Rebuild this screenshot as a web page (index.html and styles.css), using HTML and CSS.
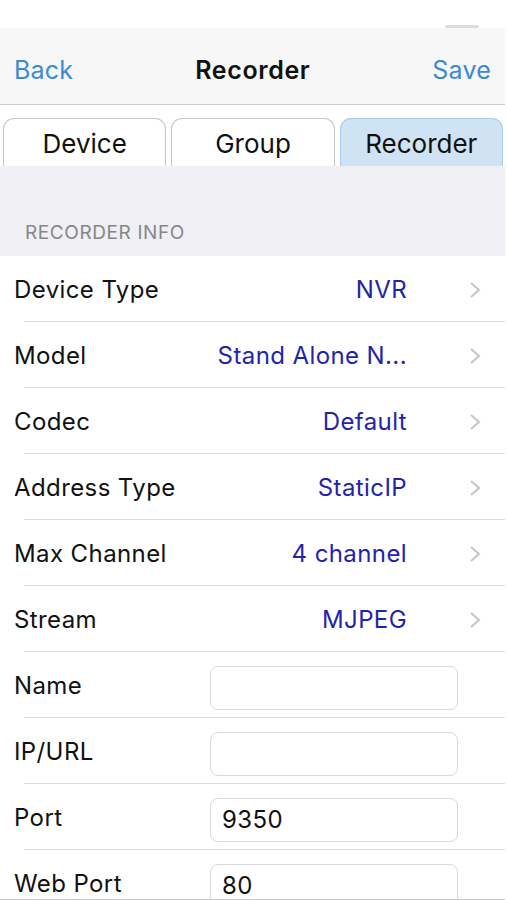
FILE: index.html
```html
<!DOCTYPE html>
<html lang="en">
<head>
    <meta charset="UTF-8">
    <meta name="viewport" content="width=device-width, initial-scale=1.0">
    <title>Recorder</title>
    <link rel="stylesheet" href="styles.css">
</head>
<body>
    <div class="screen">
        <div class="status">
            <span class="grabber"></span>
        </div>

        <header class="navbar">
            <a class="nav-btn" href="#">Back</a>
            <h1 class="nav-title">Recorder</h1>
            <a class="nav-btn" href="#">Save</a>
        </header>

        <nav class="tabs">
            <a class="tab" href="#">Device</a>
            <a class="tab" href="#">Group</a>
            <a class="tab active" href="#">Recorder</a>
        </nav>

        <div class="section-head">RECORDER INFO</div>

        <ul class="list">
            <li class="row">
                <span class="label">Device Type</span>
                <span class="value">NVR</span>
                <svg class="chevron" viewBox="0 0 12 18"><path d="M2 2 L10 9 L2 16"/></svg>
            </li>
            <li class="row">
                <span class="label">Model</span>
                <span class="value">Stand Alone N...</span>
                <svg class="chevron" viewBox="0 0 12 18"><path d="M2 2 L10 9 L2 16"/></svg>
            </li>
            <li class="row">
                <span class="label">Codec</span>
                <span class="value">Default</span>
                <svg class="chevron" viewBox="0 0 12 18"><path d="M2 2 L10 9 L2 16"/></svg>
            </li>
            <li class="row">
                <span class="label">Address Type</span>
                <span class="value">StaticIP</span>
                <svg class="chevron" viewBox="0 0 12 18"><path d="M2 2 L10 9 L2 16"/></svg>
            </li>
            <li class="row">
                <span class="label">Max Channel</span>
                <span class="value">4 channel</span>
                <svg class="chevron" viewBox="0 0 12 18"><path d="M2 2 L10 9 L2 16"/></svg>
            </li>
            <li class="row">
                <span class="label">Stream</span>
                <span class="value">MJPEG</span>
                <svg class="chevron" viewBox="0 0 12 18"><path d="M2 2 L10 9 L2 16"/></svg>
            </li>
            <li class="row">
                <label class="label" for="name">Name</label>
                <input class="field" type="text" id="name" value="">
            </li>
            <li class="row">
                <label class="label" for="ip">IP/URL</label>
                <input class="field" type="text" id="ip" value="">
            </li>
            <li class="row">
                <label class="label" for="port">Port</label>
                <input class="field" type="text" id="port" value="9350">
            </li>
            <li class="row">
                <label class="label" for="webport">Web Port</label>
                <input class="field" type="text" id="webport" value="80">
            </li>
        </ul>
    </div>
</body>
</html>
```

FILE: styles.css
```css
html, body {
    margin: 0;
    padding: 0;
    background-color: white;
    height: 100%;
    overflow: hidden;
}
body {
    font-family: Inter, "Liberation Sans", Arial, sans-serif;
    color: #111;
}
.screen {
    width: 505px;
    height: 899px;
    border-bottom: 1px solid #c9c9c9;
    overflow: hidden;
}
.status {
    height: 28px;
    display: flex;
    justify-content: flex-end;
    align-items: flex-end;
}
.grabber {
    width: 34px;
    height: 3px;
    margin-right: 26px;
    border-radius: 2px;
    background-color: #dcdcdc;
}
.navbar {
    height: 77px;
    box-sizing: border-box;
    padding: 8px 14px 0 14px;
    background-color: #f7f7f7;
    border-bottom: 1px solid #c8c8cc;
    display: flex;
    align-items: center;
    justify-content: space-between;
}
.nav-btn {
    color: #3a8ad6;
    text-decoration: none;
    font-size: 25px;
    letter-spacing: 0.2px;
}
.nav-title {
    margin: 0;
    font-size: 25px;
    font-weight: 600;
    letter-spacing: 0.6px;
}
.tabs {
    display: flex;
    gap: 5px;
    padding: 13px 2px 0 3px;
    height: 48px;
}
.tab {
    flex: 1;
    display: flex;
    align-items: center;
    justify-content: center;
    padding-top: 2px;
    border: 1.5px solid #c6c6c6;
    border-bottom: none;
    border-radius: 11px 11px 0 0;
    background-color: white;
    color: #111;
    text-decoration: none;
    font-size: 26px;
}
.tab.active {
    background-color: #cfe3f4;
    border-color: #a9cbe6;
}
.section-head {
    background-color: #efeff4;
    height: 90px;
    box-sizing: border-box;
    padding: 55px 0 0 25px;
    font-size: 19px;
    letter-spacing: 0.6px;
    color: #868689;
}
.list {
    list-style: none;
    margin: 0;
    padding: 0;
}
.row {
    height: 66px;
    box-sizing: border-box;
    padding-top: 2px;
    display: flex;
    align-items: center;
    margin-left: 24px;
    border-bottom: 1px solid #dcdce0;
}
.label {
    margin-left: -10px;
    font-size: 24px;
    letter-spacing: 0.4px;
    flex: 1;
}
.value {
    font-size: 24px;
    letter-spacing: 0.4px;
    color: #2323ad;
    margin-right: 62px;
}
.chevron {
    width: 12px;
    height: 18px;
    margin-right: 24px;
    fill: none;
    stroke: #c4c4c8;
    stroke-width: 2;
}
.field {
    width: 248px;
    height: 44px;
    box-sizing: border-box;
    margin: 4px 47px 0 0;
    border: 1px solid #dadada;
    border-radius: 8px;
    padding: 0 11px;
    font-family: inherit;
    font-size: 24px;
    letter-spacing: 0.4px;
    color: #111;
    outline: none;
}
```
